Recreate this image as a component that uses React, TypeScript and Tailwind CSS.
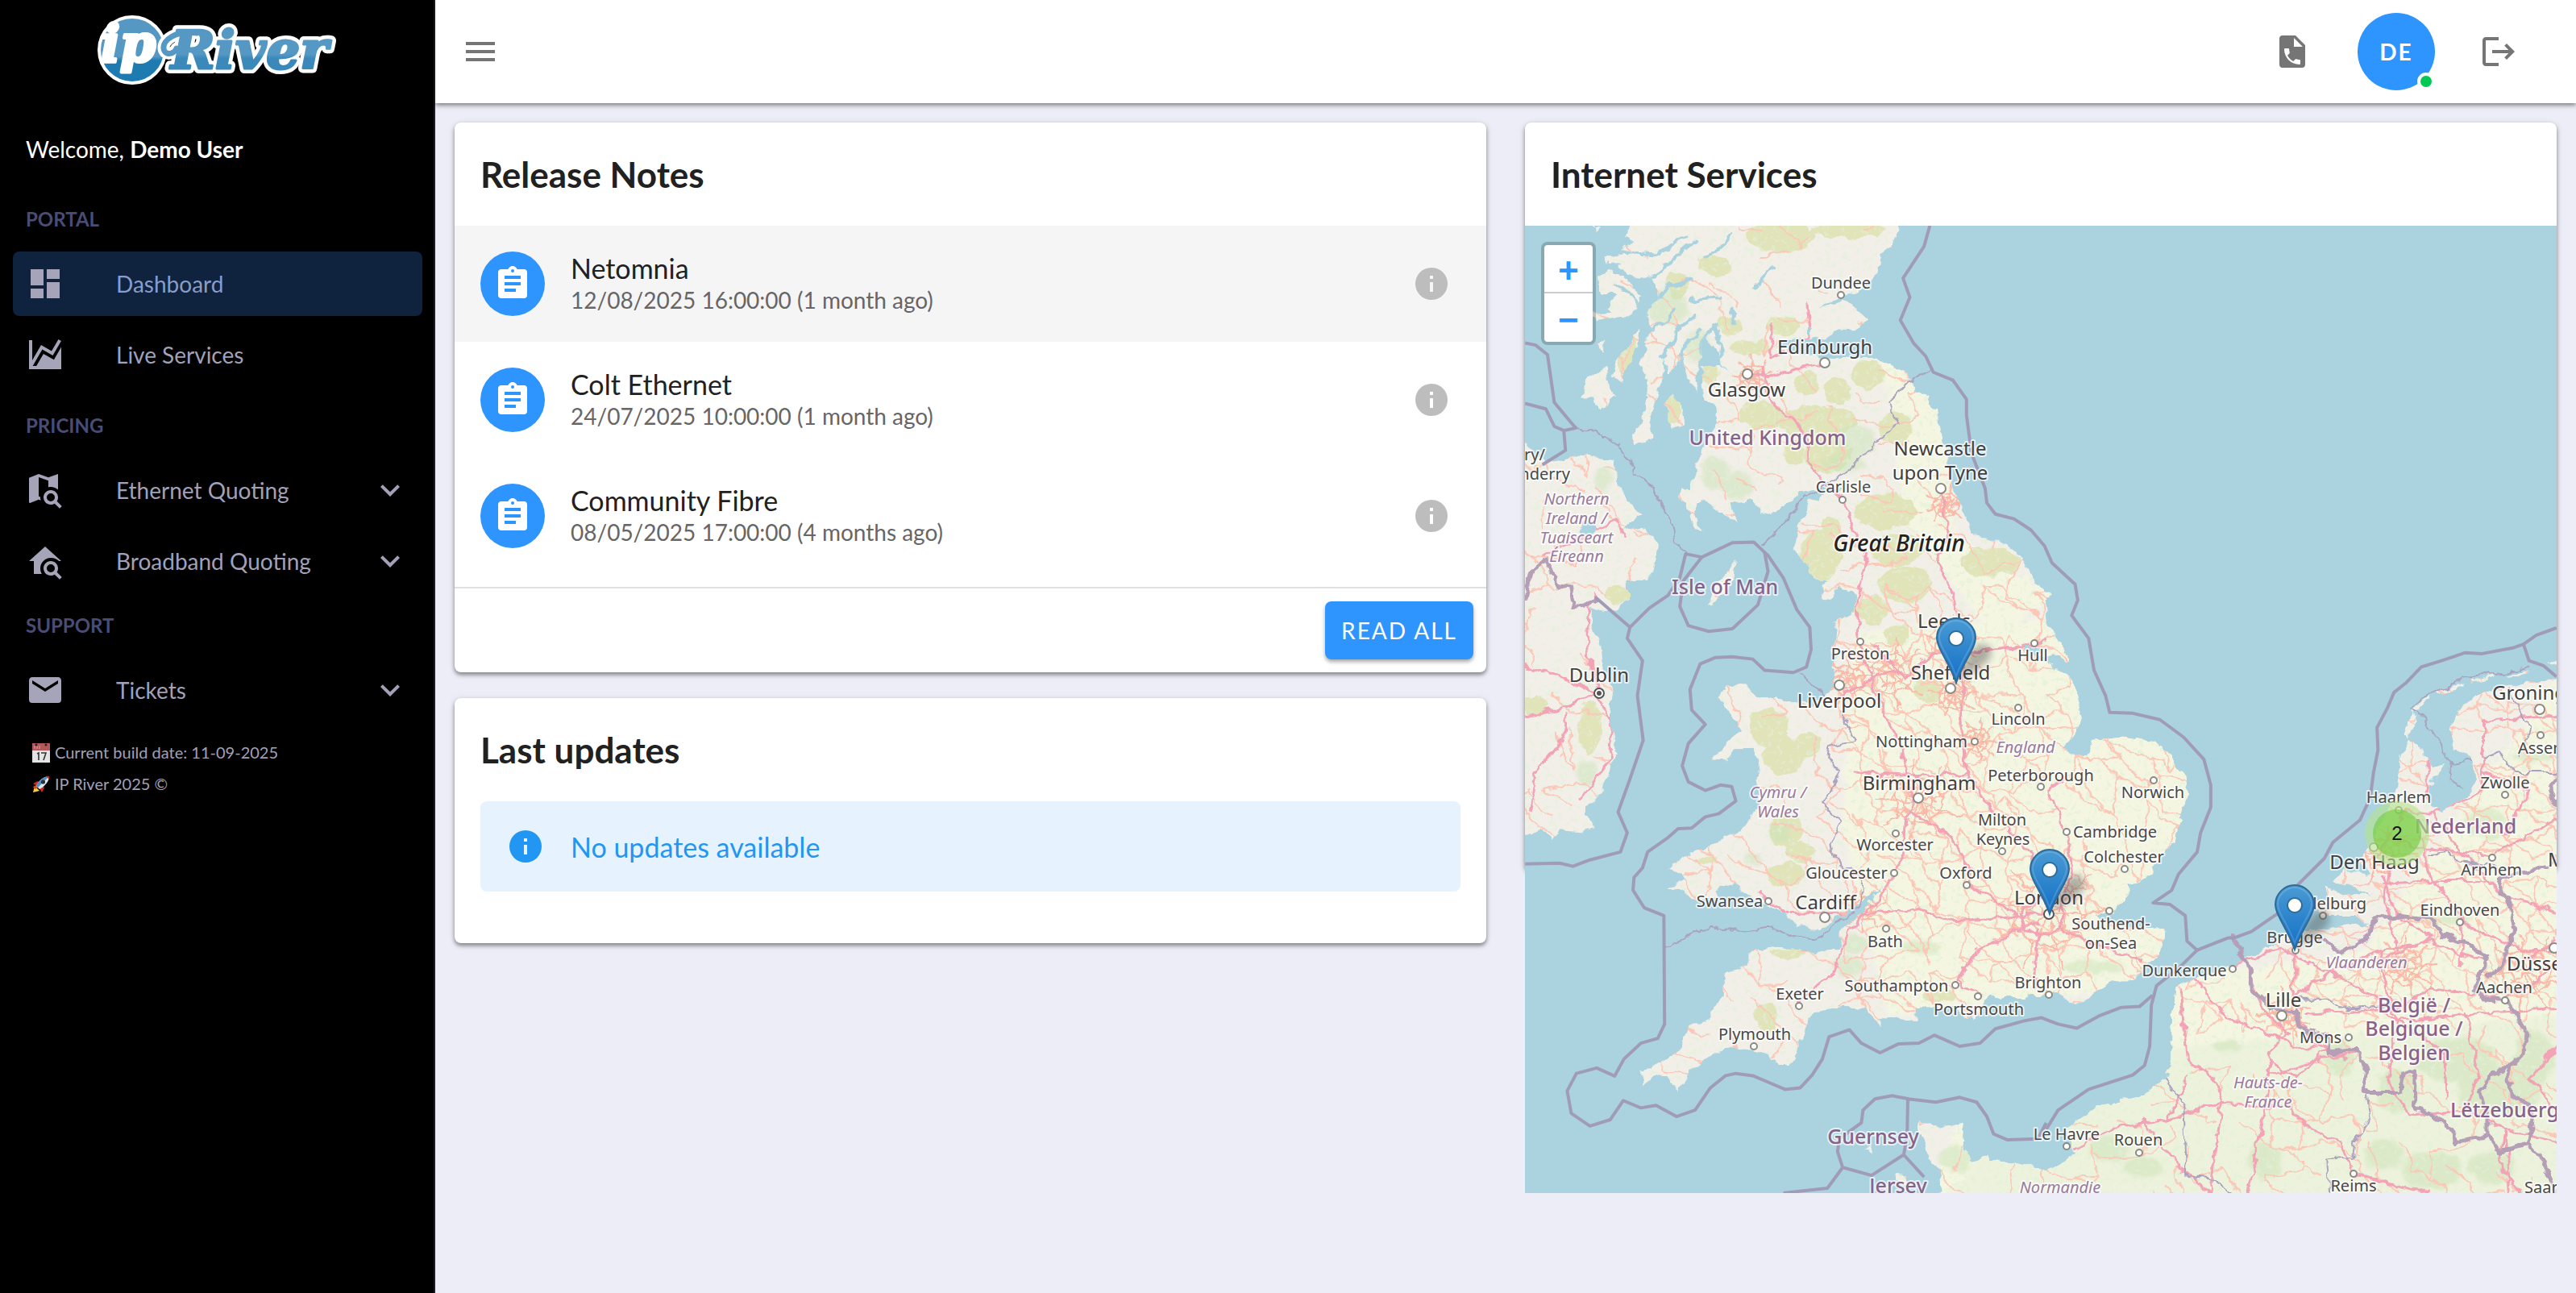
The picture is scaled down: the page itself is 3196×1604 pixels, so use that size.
import type { ReactNode } from "react";
import clsx from "clsx";

const icons = {
    menu: "M3,6H21V8H3V6M3,11H21V13H3V11M3,16H21V18H3V16Z",
    dashboard: "M13,3V9H21V3M13,21H21V11H13M3,21H11V15H3M3,13H11V3H3V13Z",
    chart: "M17.45,15.18L22,7.31V19L22,21H2V3H4V15.54L9.5,6L16,9.78L20.24,2.45L21.97,3.45L16.74,12.5L10.23,8.75L4.31,19H6.57L10.96,11.44L17.45,15.18Z",
    mapSearch:
        "M15.5,12C18,12 20,14 20,16.5C20,17.38 19.75,18.21 19.31,18.9L22.39,22L21,23.39L17.88,20.32C17.19,20.75 16.37,21 15.5,21C13,21 11,19 11,16.5C11,14 13,12 15.5,12M15.5,14A2.5,2.5 0 0,0 13,16.5A2.5,2.5 0 0,0 15.5,19A2.5,2.5 0 0,0 18,16.5A2.5,2.5 0 0,0 15.5,14M2,4.4L8,2L14,4.1L20,2V11.8C18.8,10.7 17.2,10 15.5,10C15,10 14.5,10.1 14,10.2V6.1L8,4V15.9L9,16.2V16.5C9,17.1 9.1,17.8 9.3,18.4L8,17.9L2.6,20Q2,20 2,19.5Z",
    homeSearch:
        "M15.5,12C18,12 20,14 20,16.5C20,17.38 19.75,18.21 19.31,18.9L22.39,22L21,23.39L17.88,20.32C17.19,20.75 16.37,21 15.5,21C13,21 11,19 11,16.5C11,14 13,12 15.5,12M15.5,14A2.5,2.5 0 0,0 13,16.5A2.5,2.5 0 0,0 15.5,19A2.5,2.5 0 0,0 18,16.5A2.5,2.5 0 0,0 15.5,14M12,3L2,12H5V20H9.9C9.3,18.9 9,17.8 9,16.5C9,13 12,10 15.5,10C17.8,10 19.5,11 20.6,12H22Z",
    email: "M20,8L12,13L4,8V6L12,11L20,6M20,4H4C2.89,4 2,4.89 2,6V18A2,2 0 0,0 4,20H20A2,2 0 0,0 22,18V6C22,4.89 21.1,4 20,4Z",
    chevron: "M7.41,8.58L12,13.17L16.59,8.58L18,10L12,16L6,10L7.41,8.58Z",
    clipboard:
        "M17,9H7V7H17M17,13H7V11H17M14,17H7V15H14M12,3A1,1 0 0,1 13,4A1,1 0 0,1 12,5A1,1 0 0,1 11,4A1,1 0 0,1 12,3M19,3H14.82C14.4,1.84 13.3,1 12,1C10.7,1 9.6,1.84 9.18,3H5A2,2 0 0,0 3,5V19A2,2 0 0,0 5,21H19A2,2 0 0,0 21,19V5A2,2 0 0,0 19,3Z",
    info: "M13,9H11V7H13M13,17H11V11H13M12,2A10,10 0 0,0 2,12A10,10 0 0,0 12,22A10,10 0 0,0 22,12A10,10 0 0,0 12,2Z",
    logout: "M17 7L15.59 8.41L18.17 11H8V13H18.17L15.59 15.58L17 17L22 12M4 5H12V3H4C2.9 3 2 3.9 2 5V19C2 20.1 2.9 21 4 21H12V19H4V5Z",
};

function Icon({ name, className }: { name: keyof typeof icons; className?: string }) {
    return (
        <svg viewBox="0 0 24 24" fill="currentColor" aria-hidden="true" className={clsx("size-12 shrink-0", className)}>
            <path d={icons[name]} />
        </svg>
    );
}

function Logo() {
    return (
        <svg viewBox="0 0 300 90" role="img" aria-label="ipRiver" className="h-[90px] w-[300px]">
            <defs>
                <linearGradient id="logo-disc" x1="0" y1="0" x2="0" y2="1">
                    <stop offset="0.6" stopColor="#5598c4" />
                    <stop offset="0.66" stopColor="#1d7bb2" />
                </linearGradient>
                <linearGradient id="logo-word" x1="0" y1="20" x2="0" y2="72" gradientUnits="userSpaceOnUse">
                    <stop offset="0.6" stopColor="#5598c4" />
                    <stop offset="0.7" stopColor="#3a89ba" />
                </linearGradient>
            </defs>
            <circle cx="44" cy="46" r="41" fill="url(#logo-disc)" stroke="#fff" strokeWidth="4" />
            <g fontFamily="'DejaVu Serif', serif" fontWeight="700" fontStyle="italic" strokeLinejoin="round" strokeLinecap="round">
                <g stroke="#fff" strokeWidth="12" fill="#fff">
                    <path d="M124 25C98 21 82 34 83 44c1 9 13 8 16 0" fill="none" strokeWidth="15" />
                    <text x="92" y="69" fontSize="66">
                        River
                    </text>
                </g>
                <g aria-hidden="true" stroke="url(#logo-word)" strokeWidth="3" fill="url(#logo-word)">
                    <path d="M124 25C98 21 82 34 83 44c1 9 13 8 16 0" fill="none" strokeWidth="7" />
                    <text x="92" y="69" fontSize="66">
                        River
                    </text>
                </g>
                <text x="5" y="60" fontSize="63" fill="#fff" stroke="#fff" strokeWidth="4">
                    ip
                </text>
            </g>
        </svg>
    );
}

function CalendarGlyph() {
    return (
        <svg viewBox="0 0 22 24" aria-hidden="true" className="h-6 w-[22px] shrink-0">
            <rect width="22" height="24" fill="#e4e4e4" />
            <rect width="22" height="9" fill="#b4585c" />
            <path d="M3 3v4M6 3v4M9 3v4" stroke="#d9a0a2" strokeWidth="1" />
            <circle cx="5" cy="2" r="1.5" fill="#222" />
            <circle cx="17" cy="2" r="1.5" fill="#222" />
            <path d="M6 13l2-1v9M11 12h6l-3 9" fill="none" stroke="#333" strokeWidth="1.6" />
        </svg>
    );
}

function RocketGlyph() {
    return (
        <svg viewBox="0 0 22 22" aria-hidden="true" className="size-[22px] shrink-0">
            <path d="M1 10l6-3 3 3-4 3zM12 21l3-6-3-3-3 4z" fill="#d8281e" />
            <path d="M1 21l2-8 6 6z" fill="#ffcf33" />
            <path d="M1 14l4-2 2 3-4 2z" fill="#e8431f" />
            <path d="M5 13C8 6 14 1 21 1c0 6-5 12-12 16z" fill="#dfe9ef" />
            <path d="M5 13C8 6 14 1 21 1L7 15z" fill="#4f8fc0" />
            <circle cx="13.5" cy="8" r="2.6" fill="#29323c" />
            <path d="M17 1c2-.5 3-.3 4 0 .3 1 .4 2 0 4z" fill="#d8281e" />
        </svg>
    );
}

type NavItem = { label: string; icon: keyof typeof icons; active?: boolean; expandable?: boolean };

const sections: { title: string; items: NavItem[] }[] = [
    {
        title: "PORTAL",
        items: [
            { label: "Dashboard", icon: "dashboard", active: true },
            { label: "Live Services", icon: "chart" },
        ],
    },
    {
        title: "PRICING",
        items: [
            { label: "Ethernet Quoting", icon: "mapSearch", expandable: true },
            { label: "Broadband Quoting", icon: "homeSearch", expandable: true },
        ],
    },
    { title: "SUPPORT", items: [{ label: "Tickets", icon: "email", expandable: true }] },
];

function NavRow({ item }: { item: NavItem }) {
    const row = clsx(
        "flex h-20 w-full items-center rounded-lg px-4 text-left text-[28px]",
        item.active ? "bg-[#0f233e] text-[#8a9cc8]" : "text-[#a2a1b7]"
    );
    const content = (
        <>
            <Icon name={item.icon} className="mr-16 text-[#a5a4b9]" />
            <span className="flex-1">{item.label}</span>
            {item.expandable && <Icon name="chevron" />}
        </>
    );
    return item.expandable ? (
        <button type="button" className={row}>
            {content}
        </button>
    ) : (
        <a href="#" className={row}>
            {content}
        </a>
    );
}

function Sidebar() {
    return (
        <aside className="w-[540px] shrink-0 bg-black shadow-[inset_-2px_0_#1e1e1e]">
            <div className="flex h-32 justify-center pt-4">
                <Logo />
            </div>
            <p className="flex h-[104px] items-start px-8 pt-9 text-[28px] text-white">
                <span>
                    Welcome, <strong>Demo User</strong>
                </span>
            </p>
            <nav>
                {sections.map((section) => (
                    <div key={section.title} className={clsx("px-4", section.title === "PORTAL" && "pb-2")}>
                        <h2 className="flex h-20 items-center px-4 text-2xl font-bold text-[#4b4c73]">{section.title}</h2>
                        <div className="flex flex-col gap-2">
                            {section.items.map((item) => (
                                <NavRow key={item.label} item={item} />
                            ))}
                        </div>
                    </div>
                ))}
            </nav>
            <div className="px-10 pt-[18px] text-[20px] leading-[39px] text-[#a2a1b7]">
                <p className="flex items-center gap-[6px]">
                    <CalendarGlyph /> Current build date: 11-09-2025
                </p>
                <p className="flex items-center gap-[6px]">
                    <RocketGlyph /> IP River 2025 ©
                </p>
            </div>
        </aside>
    );
}

function TopBar() {
    return (
        <header className="relative z-10 flex h-32 items-center justify-between bg-white pl-8 pr-[72px] text-[#757575] shadow-[0_2px_6px_rgba(0,0,0,0.55)]">
            <button type="button" aria-label="Toggle menu">
                <Icon name="menu" />
            </button>
            <div className="flex items-center">
                <button type="button" aria-label="Call records">
                    <svg viewBox="0 0 24 24" aria-hidden="true" className="size-12">
                        <path d="M6,2H14L20,8V20A2,2 0 0,1 18,22H6A2,2 0 0,1 4,20V4A2,2 0 0,1 6,2M13,3.5V9H18.5L13,3.5Z" fill="currentColor" />
                        <path
                            transform="translate(5.333 8.333) scale(.5556)"
                            d="M6.62,10.79C8.06,13.62 10.38,15.94 13.21,17.38L15.41,15.18C15.69,14.9 16.08,14.82 16.43,14.93C17.55,15.3 18.75,15.5 20,15.5A1,1 0 0,1 21,16.5V20A1,1 0 0,1 20,21A17,17 0 0,1 3,4A1,1 0 0,1 4,3H7.5A1,1 0 0,1 8.5,4C8.5,5.25 8.7,6.45 9.07,7.57C9.18,7.92 9.1,8.31 8.82,8.59L6.62,10.79Z"
                            fill="#fff"
                        />
                    </svg>
                </button>
                <button
                    type="button"
                    className="relative ml-[57px] flex size-24 items-center justify-center rounded-full bg-[#2e95ff] text-[28px] font-bold tracking-[2px] text-white"
                >
                    DE
                    <span className="absolute bottom-0 right-0 size-[22px] rounded-full border-4 border-white bg-[#00c853]" />
                </button>
                <button type="button" aria-label="Log out" className="ml-[55px]">
                    <Icon name="logout" />
                </button>
            </div>
        </header>
    );
}

function Card({ title, className, children }: { title: string; className?: string; children: ReactNode }) {
    return (
        <section className={clsx("rounded-lg bg-white shadow-[0_3px_5px_rgba(0,0,0,0.4),0_2px_10px_rgba(0,0,0,0.12)]", className)}>
            <h2 className="flex h-32 items-center px-8 text-[44px] font-bold text-[#212121]">{title}</h2>
            {children}
        </section>
    );
}

const notes = [
    { name: "Netomnia", date: "12/08/2025 16:00:00 (1 month ago)" },
    { name: "Colt Ethernet", date: "24/07/2025 10:00:00 (1 month ago)" },
    { name: "Community Fibre", date: "08/05/2025 17:00:00 (4 months ago)" },
];

function ReleaseNotes() {
    return (
        <Card title="Release Notes">
            <ul className="pb-4">
                {notes.map((note, i) => (
                    <li key={note.name} className={clsx("flex h-36 items-center px-8", i === 0 && "bg-[#f5f5f5]")}>
                        <span className="flex size-20 items-center justify-center rounded-full bg-[#2e95ff] text-white">
                            <Icon name="clipboard" />
                        </span>
                        <div className="ml-8 flex-1">
                            <div className="text-[34px] leading-[40px] text-[#212121]">{note.name}</div>
                            <div className="text-[28px] leading-[38px] text-[#666]">{note.date}</div>
                        </div>
                        <button type="button" aria-label={`About ${note.name}`} className="mr-3 text-[#bdbdbd]">
                            <Icon name="info" />
                        </button>
                    </li>
                ))}
            </ul>
            <div className="flex justify-end border-t-2 border-[#e0e0e0] p-4">
                <button
                    type="button"
                    className="h-[72px] rounded-lg bg-[#2e95ff] px-5 text-[28px] tracking-[2px] text-white shadow-[0_3px_5px_rgba(0,0,0,0.35)]"
                >
                    READ ALL
                </button>
            </div>
        </Card>
    );
}

function LastUpdates() {
    return (
        <Card title="Last updates" className="pb-16">
            <div role="status" className="mx-8 flex h-28 items-center rounded-lg bg-[#e7f2ff] px-8 text-[34px] text-[#2196f3]">
                <Icon name="info" className="mr-8" />
                No updates available
            </div>
        </Card>
    );
}

/* The map is drawn on a 3100-unit survey grid and scaled to the 1280x1200 view. */
const GRID_X = 0.4209;
const GRID_Y = 0.3954;
const toX = (x: number) => Math.round(x * GRID_X - 12);
const toY = (y: number) => Math.round(y * GRID_Y - 10);

const britain =
    "M1128,0 1128,25 1110,80 1075,120 1065,170 1035,215 1010,232 960,245 895,285 965,260 990,270 1010,300 1042,320 1000,352 950,350 920,375 870,385 800,385 770,400 860,430 900,445 960,440 1065,440 1110,465 1145,480 1165,520 1215,570 1245,610 1258,690 1270,750 1290,850 1310,900 1335,960 1345,990 1400,1005 1470,1040 1500,1080 1520,1130 1560,1180 1585,1190 1558,1205 1570,1275 1610,1335 1630,1385 1600,1378 1560,1375 1500,1345 1540,1385 1575,1400 1595,1420 1630,1435 1655,1490 1677,1573 1650,1618 1617,1663 1650,1688 1685,1693 1705,1643 1790,1633 1885,1648 1940,1698 1975,1748 1983,1823 1955,1893 1945,1953 1910,2013 1875,2033 1875,2060 1830,2083 1803,2093 1805,2143 1760,2178 1710,2183 1760,2208 1840,2233 1912,2228 1900,2313 1850,2353 1815,2398 1760,2398 1710,2428 1650,2468 1600,2438 1520,2438 1500,2448 1430,2448 1400,2433 1350,2520 1310,2500 1300,2473 1180,2478 1180,2523 1130,2513 1075,2508 1075,2543 1062,2518 1030,2488 985,2473 905,2488 865,2513 840,2593 815,2653 780,2653 740,2623 700,2608 600,2613 560,2643 520,2673 500,2713 475,2743 455,2698 410,2693 375,2721 368,2683 410,2658 470,2623 515,2543 570,2513 612,2443 620,2368 690,2343 690,2303 780,2285 870,2308 950,2293 965,2233 1020,2183 1085,2093 1040,2133 1000,2163 950,2193 900,2228 830,2223 800,2183 740,2153 680,2123 650,2088 590,2108 600,2128 545,2148 500,2113 455,2098 500,2078 490,2053 450,2043 510,1998 590,1963 680,1913 715,1843 720,1743 705,1663 650,1668 625,1703 575,1701 640,1638 665,1603 630,1548 590,1510 625,1465 680,1465 715,1510 780,1510 880,1530 920,1500 935,1470 940,1370 945,1265 1000,1240 1000,1180 960,1165 930,1190 910,1200 895,1190 915,1140 880,1140 860,1090 820,1035 835,960 870,890 960,850 880,850 830,860 820,890 770,920 720,930 700,880 640,895 655,965 600,920 545,885 525,920 545,980 530,980 515,925 485,880 490,840 515,855 530,780 555,730 560,690 600,650 590,600 555,570 545,460 610,460 640,490 600,440 570,380 550,370 545,430 530,545 510,510 490,440 465,480 450,490 430,440 435,480 415,570 400,650 405,690 350,720 350,680 370,640 385,580 395,520 370,460 385,400 400,350 385,300 420,250 395,190 350,180 300,150 350,110 310,100 350,80 330,60 345,0Z";
const islands =
    "M260,125 320,115 345,140 270,148ZM240,190 270,165 320,185 375,240 360,285 320,315 270,285 300,240 250,240ZM230,300 330,292 330,305 232,322ZM370,350 365,400 310,515 285,500 300,440ZM270,465 275,510 295,560 240,605 230,560 195,560 215,500ZM465,550 490,580 500,650 460,660 438,590ZM655,1080 650,1130 600,1205 570,1215 590,1150ZM270,385 250,430 248,400ZM225,25 245,25 235,45ZM1030,2930 1055,2915 1050,2935ZM1115,3002 1155,3005 1160,3030 1120,3025Z";
const ireland =
    "M0,700 29,710 60,750 90,770 150,760 200,742 290,760 295,830 330,880 370,930 320,980 385,970 420,1040 405,1110 380,1140 330,1140 330,1200 270,1240 225,1220 225,1290 250,1330 255,1400 285,1490 280,1568 300,1640 285,1720 260,1790 200,1870 235,1915 190,1925 130,1920 105,1950 80,1920 0,1950Z";
const continent =
    "M1185,2833 1240,2853 1325,2843 1320,2903 1350,2968 1390,2948 1500,2973 1570,2988 1650,2938 1625,2853 1720,2788 1830,2758 1915,2703 1935,2653 1935,2543 1940,2473 1945,2418 2000,2388 2120,2348 2220,2288 2290,2235 2370,2240 2440,2220 2520,2215 2480,2190 2370,2190 2360,2150 2390,2130 2380,2103 2440,2120 2520,2125 2410,2080 2440,2043 2520,2060 2490,2010 2520,1973 2570,1863 2600,1783 2610,1683 2630,1633 2680,1673 2700,1730 2745,1720 2695,1783 2700,1853 2730,1863 2800,1813 2830,1753 2820,1693 2765,1673 2760,1603 2775,1545 2830,1500 2920,1470 3090,1440 3090,3080 1255,3080 1250,2990 1210,2930ZM2650,1553 2660,1583 2625,1628 2620,1603ZM2640,1550 2695,1500 2700,1506 2650,1556ZM2720,1480 2795,1460 2790,1470 2720,1490ZM2820,1450 2885,1438 2884,1446 2820,1458ZM2925,1440 2990,1422 2988,1430 2928,1446ZM3040,1395 3090,1380 3090,1395 3045,1402Z";
const land = `${britain}${islands}${ireland}${continent}`;

const lochs =
    "M395,190 450,150 530,70 M350,110 420,115 500,60 M420,250 460,210 520,190 M400,350 440,330 470,290 M385,300 340,240 300,215 M430,440 460,400 480,350 530,310 M490,440 500,400 545,350 M545,430 550,380 590,340 M600,440 605,400 580,340 M640,290 650,330 M520,260 600,250 M560,130 640,60 M700,220 760,160";

const moors: [number, number, number, number][] = [
    [780, 60, 100, 50], [980, 40, 110, 25], [590, 150, 50, 30], [480, 210, 30, 40], [790, 340, 50, 30], [690, 410, 60, 25],
    [630, 340, 40, 30], [725, 620, 70, 45], [890, 640, 120, 50], [1040, 490, 50, 45], [950, 545, 40, 40], [860, 520, 35, 40],
    [1120, 660, 50, 50], [920, 740, 70, 60], [820, 740, 30, 30], [1090, 920, 90, 55], [1120, 1040, 80, 50], [1150, 1150, 80, 60],
    [1050, 1230, 50, 45], [900, 1060, 60, 80], [930, 970, 30, 30], [1400, 1080, 90, 45], [1125, 1310, 40, 30], [1215, 1480, 40, 50],
    [750, 1600, 60, 60], [790, 1690, 60, 60], [860, 1650, 40, 40], [800, 1920, 45, 60], [800, 2060, 55, 40], [840, 1990, 40, 30],
    [570, 2015, 30, 12], [740, 2510, 35, 45], [800, 2310, 50, 18], [300, 1180, 35, 30], [220, 1600, 35, 80], [60, 1530, 40, 30],
    [575, 490, 30, 40], [465, 600, 25, 45], [330, 430, 30, 70], [1250, 2440, 50, 20],
];

const woods: [number, number, number, number][] = [
    [590, 800, 40, 50], [650, 840, 50, 40], [1000, 700, 60, 50], [970, 770, 60, 30], [450, 280, 60, 60], [540, 400, 40, 50],
    [1700, 2350, 90, 20], [1190, 2290, 60, 20], [980, 2350, 50, 30], [1000, 2280, 40, 30], [780, 1930, 30, 30], [700, 2010, 25, 20],
    [2600, 2740, 60, 70], [2770, 2640, 120, 70], [2900, 2740, 120, 80], [3000, 2640, 60, 90], [2560, 2940, 60, 50], [2210, 2960, 50, 60],
    [2430, 2640, 40, 60], [2700, 2990, 90, 60], [2880, 2980, 70, 50], [1750, 2920, 60, 40], [1850, 2980, 60, 30], [2100, 2600, 40, 20],
    [1300, 2950, 50, 40], [2860, 1900, 60, 50], [2750, 2200, 70, 20], [3000, 1690, 60, 20], [260, 820, 20, 40], [210, 1740, 30, 40],
];

const motorways = [
    "M860,270 L870,380 755,440 M755,340 L755,440 M690,490 L750,500 865,462 912,455 M720,470 L760,580 860,680 865,760 900,820 965,884 1000,980 1035,1080 1005,1200 1010,1330 1060,1480 1090,1560 1140,1660 1150,1740 1180,1820 1150,1880 1140,2020 1080,2120 1030,2180 960,2280 940,2370 835,2460",
    "M1255,850 1280,1000 1240,1060 1300,1220 1320,1400 1315,1560 1330,1740 1400,1850 1520,2000 1570,2150 M1060,1350 1150,1440 1240,1360 1390,1360 1560,1330 M950,1500 1050,1450 1130,1420 M1000,1740 1140,1750 1330,1745 M1160,1860 1280,1940 1340,2040 1340,2090 1480,2190 1570,2180 M1030,2185 1190,2170 1290,2205 1480,2190",
    "M720,2120 800,2180 900,2185 1030,2180 M1540,2210 1360,2300 1300,2400 1370,2440 M1620,1760 1570,1800 1620,1920 1640,2050 1600,2180 M1540,2140 1600,2120 1620,2200 1580,2250 1500,2240 1490,2180 1540,2140 M1600,2220 1700,2280 1850,2330 M1540,2230 1530,2420",
    "M150,1560 140,1640 60,1740 40,1860 M250,1490 215,1380 210,1260 235,1180 M245,1500 290,1600 280,1700 190,1830 M245,1490 130,1440 30,1410 M245,1490 130,1540 30,1560 M320,1000 300,950 200,1000 80,1060",
    "M2000,2390 2100,2510 2230,2560 2330,2620 2360,2600 M2160,2360 2200,2480 2280,2560 2220,2620 2220,2750 2180,2950 2160,3060 M1960,2420 1980,2640 2060,2700 2080,2780 2060,2950 2050,3060 M1650,2920 1740,2860 1920,2830 2080,2780 2280,2790 2330,2850 2430,2900 2470,3000 2700,3060 M1990,2690 1920,2830 M2220,2640 2300,2700 2400,2600",
    "M2120,2350 2250,2290 2290,2310 2400,2370 2500,2420 2600,2520 2800,2500 2880,2490 3069,2480 M2300,2300 2290,2450 2400,2370 2550,2300 2700,2270 2850,2330 M2550,2300 2570,2440 2600,2520 2570,2700 2630,2820 2800,2800 2920,2860 2900,2960 2960,3060 M2330,2500 2450,2490 2600,2480 M2800,2490 2840,2680 2800,2800",
    "M2540,2000 2620,1860 2700,1870 2790,1990 2850,2060 2920,2130 3069,2180 M2600,1960 2700,1980 2880,2000 3069,1890 M2560,2090 2700,2080 2860,2080 M2600,2300 2560,2130 2590,2000 M2700,1870 2850,1800 2850,1580 3069,1560 M2660,1900 2690,2050 2790,2210 2790,2350 M2690,1830 2690,1640 2760,1590 M2920,1930 2990,1800 2850,1740 M2990,2330 3069,2260 M2790,2210 2970,2300 3069,2300 M2910,2460 3069,2340",
    "M2560,2330 2700,2260 2600,2190 2560,2070 M2600,2480 2700,2420 2850,2440 2910,2460 M2600,2520 2740,2620 2740,2760 M2300,2500 2360,2590 2450,2640 M2210,2700 2360,2640 2480,2620 M1850,2830 1960,2980 2050,3060 M2920,2860 3069,2900 M2920,2860 2930,3060 M3069,2600 2990,2700 3069,2800",
];

const borders = [
    "M1222,25 1205,90 1143,190 1163,250 1135,322 1175,395 1210,435 1232,485 1290,510 1330,570 1330,620 1345,740 1385,850 1390,895 1415,930 1470,945 1520,980 1560,1030 1582,1083 1612,1113 1650,1150 1658,1200 1640,1248 1690,1320 1706,1420 1740,1500 1752,1552 1820,1555 1900,1575 1970,1630 2030,1700 2050,1780 2050,1850 2020,1930 2010,1990 1955,2060 1935,2110 1880,2150 1930,2155 1975,2190 1980,2270 2010,2298 2100,2260 2118,2260 2170,2240 2245,2185 2300,2100 2385,2010 2410,1960 2490,1890 2520,1820 2530,1740 2543,1670 2540,1600 2570,1540 2590,1490 2625,1460 2670,1410 2730,1390 2800,1365 2850,1368 2940,1350 2972,1338 3010,1310 3069,1287",
    "M2972,1338 2988,1390 3030,1405 3069,1440",
    "M2010,2298 1960,2350 1890,2410 1875,2470 1870,2600 1855,2660 1820,2690 1690,2735 1600,2800 1565,2860",
    "M1878,2440 1840,2475 1785,2478 1720,2505 1655,2543 1600,2530 1550,2510 1500,2520 1415,2545 1370,2590 1310,2600 1235,2565 1190,2590 1130,2592 1075,2620 1020,2590 985,2548 925,2570 905,2640 875,2690 840,2730 795,2735 740,2710 700,2692 650,2685 620,2692 575,2730 530,2800 475,2820 415,2785 370,2793 318,2770 280,2830 220,2850 165,2810 153,2740 180,2685 240,2668 293,2693 320,2640 370,2590 420,2575 440,2530 438,2190 380,2165 347,2110 350,2070 375,2040 390,1990 450,1945 480,1917 520,1915 560,1880 600,1870 650,1830 638,1785 605,1780 560,1797 510,1770 492,1720 510,1650 560,1590 520,1545 515,1480 545,1400 590,1380 640,1378 700,1385 735,1420 820,1427 858,1410 872,1355 868,1285 830,1230 790,1130 745,1060 703,1018 640,1020 550,1065 502,1055 485,1130 450,1185 395,1225 338,1285 235,1190",
    "M338,1285 330,1320 375,1390 360,1500 377,1640 335,1770 303,1865 330,1930 310,1990 220,2015 170,2035 130,2025 29,2028",
    "M550,1065 495,1140 485,1220 510,1280 570,1298 640,1290 715,1215 745,1110 735,1050",
    "M29,393 60,400 95,430 115,580 178,660 143,668 115,655 90,600 29,583M143,668 148,730 80,775",
    "M1160,2765 1110,2755 1060,2765 1025,2800 1020,2840 955,2890 950,2930 965,2980 1050,3005 1145,2940 1155,2880 1157,2765 1240,2775 1310,2760 1360,2775 1390,2820 1410,2875 1450,2893 1540,2890 1565,2840",
    "M1145,2940 1205,3010M965,2980 920,3045 790,3060",
];

const landBorders = [
    "M235,1190 220,1215 170,1220 160,1160 130,1150 90,1075 50,1110 29,1190",
    "M2118,2260 2165,2360 2170,2420 2230,2480 2300,2490 2310,2540 2390,2570 2400,2620 2480,2610 2510,2660 2500,2740 2610,2740 2620,2680 2655,2680 2650,2790 2740,2840 2780,2900 2870,2880 2905,2930 2990,2910 3030,2960 3060,3060",
    "M2370,2270 2440,2300 2520,2250 2530,2200 2600,2190 2700,2200 2730,2250 2790,2270 2860,2320 2830,2420 2850,2455 2930,2460 2980,2550 2975,2620 2930,2670 2880,2680 2845,2740 2870,2840 2870,2880M2930,2670 2930,2740 3000,2800 2985,2910",
    "M2870,2380 2910,2340 2945,2230 2920,2130 2890,2070 3000,2050 3069,2020M3069,1760 3045,1820 3069,1840",
];

const thinBorders = [
    "M178,660 240,670 300,710 360,800 410,850 430,900 465,970 475,1010 502,1055",
    "M725,1030 800,950 850,880 940,825 1000,780 1060,700 1130,650 1100,580 1160,515 1232,475",
    "M445,2285 580,2220 640,2238 750,2225 820,2255 890,2265 960,2200 1020,2160",
    "M840,1427 915,1500M960,1560 1010,1640 925,1660 920,1700 960,1730 930,1800 905,1840 960,1900 930,1960 935,2000 970,2033 1025,2080 1020,2160",
    "M1915,2703 1970,2780 1980,3010 2060,3020 2120,3060M2510,2740 2520,2830 2480,2890 2470,2950 2390,2960 2400,3060",
    "M2650,1545 2700,1600 2760,1710 2820,1700M2760,1710 2755,1760 2790,1790M2640,1540 2700,1490 2810,1440 2930,1430 2990,1410M2310,2450 2400,2450 2450,2480 2570,2470",
    "M2700,2000 2740,1990 2800,2020 2890,2040M2850,1700 2900,1680 2950,1740 3069,1740M2930,1480 2990,1600 2960,1690",
];

// Minor roads: a jittered grid whose neighbours are joined, thinned out over the uplands.
const minorRoads = (() => {
    const step = 76;
    const cols = Math.ceil(3120 / step);
    const rnd = (a: number, b: number, k: number) => {
        const v = Math.sin(a * 127.1 + b * 311.7 + k * 74.7) * 43758.5453;
        return v - Math.floor(v);
    };
    const node = (i: number, j: number) => [
        Math.round((i + rnd(i, j, 1) * 0.8) * step),
        Math.round((j + rnd(i, j, 2) * 0.8) * step),
    ];
    const parts: string[] = [];
    for (let i = 0; i < cols; i++) {
        for (let j = 0; j < cols; j++) {
            const [x, y] = node(i, j);
            const upland = y < 1150 || x < 900 || y > 2480;
            const density = upland ? 0.22 : 0.55;
            const targets = [node(i + 1, j), node(i, j + 1), node(i + 1, j + 1)];
            targets.forEach(([tx, ty], k) => {
                if (rnd(i, j, k + 3) > density) return;
                const bend = (rnd(i, j, k + 9) - 0.5) * 40;
                parts.push(`M${x},${y}Q${Math.round((x + tx) / 2 + bend)},${Math.round((y + ty) / 2 - bend)} ${tx},${ty}`);
            });
        }
    }
    return parts.join("");
})();

// Dense street webs round the big towns
const hubs: [number, number, number][] = [
    [1570, 2190, 110], [1190, 1830, 80], [1110, 1430, 70], [980, 1450, 50], [1290, 1330, 50], [700, 500, 40],
    [1270, 900, 40], [1290, 1500, 45], [1360, 1640, 40], [1030, 2170, 40], [2270, 2500, 50], [2620, 2350, 60], [2560, 2000, 60], [2980, 2370, 80],
];
const webs = hubs
    .map(([x, y, r]) =>
        Array.from({ length: 9 }, (_, i) => {
            const a = (i * Math.PI * 2) / 9 + x;
            const b = a + 0.9;
            const p = (ang: number, f: number) => `${Math.round(x + Math.cos(ang) * r * f)},${Math.round(y + Math.sin(ang) * r * f)}`;
            return `M${x},${y}L${p(a, 1.6)}M${p(a, 0.5)}L${p(b, 0.6)}M${p(a, 1)}L${p(b, 0.9)}`;
        }).join("")
    )
    .join("");

type Kind = "town" | "city" | "country" | "region" | "island";
type Label = { text: string; x: number; y: number; kind: Kind; anchor?: "start" | "end" };

const labelStyle: Record<Kind, string> = {
    town: "text-[20px] fill-[#484848]",
    city: "text-[24px] fill-[#404040]",
    country: "text-[25px] font-medium fill-[#87628a]",
    region: "text-[20px] italic fill-[#977a9e]",
    island: "text-[28px] italic font-medium fill-[#222]",
};

const labels: Label[] = [
    { text: "Dundee", x: 959, y: 222, kind: "town" },
    { text: "Edinburgh", x: 912, y: 427, kind: "city" },
    { text: "Glasgow", x: 682, y: 562, kind: "city" },
    { text: "United Kingdom", x: 744, y: 714, kind: "country" },
    { text: "Newcastle", x: 1253, y: 745, kind: "city" },
    { text: "upon Tyne", x: 1253, y: 823, kind: "city" },
    { text: "Carlisle", x: 966, y: 862, kind: "town" },
    { text: "Derry/", x: 88, y: 762, kind: "town", anchor: "end" },
    { text: "Londonderry", x: 161, y: 821, kind: "town", anchor: "end" },
    { text: "Northern", x: 180, y: 901, kind: "region" },
    { text: "Ireland /", x: 180, y: 961, kind: "region" },
    { text: "Tuaisceart", x: 181, y: 1021, kind: "region" },
    { text: "Éireann", x: 181, y: 1081, kind: "region" },
    { text: "Great Britain", x: 1130, y: 1048, kind: "island" },
    { text: "Isle of Man", x: 617, y: 1181, kind: "country" },
    { text: "Leeds", x: 1265, y: 1288, kind: "city" },
    { text: "Preston", x: 1017, y: 1385, kind: "town" },
    { text: "Hull", x: 1525, y: 1391, kind: "town" },
    { text: "Sheffield", x: 1282, y: 1450, kind: "city" },
    { text: "Dublin", x: 248, y: 1458, kind: "city" },
    { text: "Liverpool", x: 955, y: 1537, kind: "city" },
    { text: "Lincoln", x: 1483, y: 1592, kind: "town" },
    { text: "Nottingham", x: 1197, y: 1661, kind: "town" },
    { text: "England", x: 1503, y: 1680, kind: "region" },
    { text: "Birmingham", x: 1190, y: 1795, kind: "city" },
    { text: "Peterborough", x: 1548, y: 1767, kind: "town" },
    { text: "Norwich", x: 1880, y: 1820, kind: "town" },
    { text: "Cymru /", x: 775, y: 1821, kind: "region" },
    { text: "Wales", x: 775, y: 1882, kind: "region" },
    { text: "Milton", x: 1436, y: 1906, kind: "town" },
    { text: "Keynes", x: 1438, y: 1967, kind: "town" },
    { text: "Worcester", x: 1119, y: 1986, kind: "town" },
    { text: "Cambridge", x: 1768, y: 1945, kind: "town" },
    { text: "Colchester", x: 1794, y: 2023, kind: "town" },
    { text: "Gloucester", x: 976, y: 2073, kind: "town" },
    { text: "Oxford", x: 1328, y: 2074, kind: "town" },
    { text: "Swansea", x: 631, y: 2163, kind: "town" },
    { text: "Cardiff", x: 914, y: 2169, kind: "city" },
    { text: "London", x: 1574, y: 2155, kind: "city" },
    { text: "Southend-", x: 1755, y: 2233, kind: "town" },
    { text: "on-Sea", x: 1755, y: 2294, kind: "town" },
    { text: "Bath", x: 1091, y: 2288, kind: "town" },
    { text: "Exeter", x: 838, y: 2452, kind: "town" },
    { text: "Southampton", x: 1124, y: 2427, kind: "town" },
    { text: "Brighton", x: 1571, y: 2417, kind: "town" },
    { text: "Portsmouth", x: 1365, y: 2502, kind: "town" },
    { text: "Plymouth", x: 705, y: 2580, kind: "town" },
    { text: "Guernsey", x: 1055, y: 2906, kind: "country" },
    { text: "Jersey", x: 1128, y: 3060, kind: "country" },
    { text: "Le Havre", x: 1624, y: 2894, kind: "town" },
    { text: "Rouen", x: 1837, y: 2912, kind: "town" },
    { text: "Normandie", x: 1607, y: 3059, kind: "region" },
    { text: "Dunkerque", x: 1972, y: 2379, kind: "town" },
    { text: "Brugge", x: 2298, y: 2275, kind: "town" },
    { text: "Middelburg", x: 2510, y: 2169, kind: "town", anchor: "end" },
    { text: "Lille", x: 2264, y: 2477, kind: "city" },
    { text: "Mons", x: 2374, y: 2589, kind: "town" },
    { text: "Hauts-de-", x: 2218, y: 2731, kind: "region" },
    { text: "France", x: 2218, y: 2792, kind: "region" },
    { text: "Reims", x: 2472, y: 3054, kind: "town" },
    { text: "Vlaanderen", x: 2509, y: 2355, kind: "region" },
    { text: "België /", x: 2650, y: 2493, kind: "country" },
    { text: "Belgique /", x: 2650, y: 2568, kind: "country" },
    { text: "Belgien", x: 2650, y: 2643, kind: "country" },
    { text: "Haarlem", x: 2604, y: 1835, kind: "town" },
    { text: "Den Haag", x: 2532, y: 2044, kind: "city" },
    { text: "Nederland", x: 2800, y: 1931, kind: "country" },
    { text: "Zwolle", x: 2918, y: 1791, kind: "town" },
    { text: "Arnhem", x: 2877, y: 2064, kind: "town" },
    { text: "Eindhoven", x: 2785, y: 2190, kind: "town" },
    { text: "Aachen", x: 2916, y: 2433, kind: "town" },
    { text: "Groningen", x: 2880, y: 1513, kind: "city", anchor: "start" },
    { text: "Assen", x: 2955, y: 1682, kind: "town", anchor: "start" },
    { text: "Münster", x: 3044, y: 2035, kind: "city", anchor: "start" },
    { text: "Düsseldorf", x: 2922, y: 2361, kind: "city", anchor: "start" },
    { text: "Lëtzebuerg", x: 2757, y: 2823, kind: "country", anchor: "start" },
    { text: "Saarbrücken", x: 2974, y: 3060, kind: "town", anchor: "start" },
];

const towns: [number, number, number][] = [
    [959, 243, 4], [912, 456, 6], [684, 491, 6], [1254, 851, 6], [964, 885, 4], [1017, 1331, 4], [1530, 1335, 4], [1283, 1477, 6],
    [955, 1468, 6], [1483, 1537, 4], [1355, 1645, 4], [1188, 1822, 6], [1548, 1786, 4], [1881, 1765, 4], [1122, 1932, 4],
    [1435, 1989, 4], [1624, 1927, 4], [1796, 2044, 4], [1117, 2055, 4], [1330, 2094, 4], [746, 2145, 4], [912, 2196, 6],
    [1092, 2231, 4], [1752, 2175, 4], [837, 2474, 4], [1298, 2407, 4], [1572, 2439, 4], [1364, 2443, 4], [704, 2600, 4],
    [1625, 2914, 4], [1839, 2934, 4], [2114, 2358, 4], [2299, 2300, 4], [2381, 2191, 4], [2260, 2505, 6], [2456, 2571, 4],
    [2471, 3000, 4], [2603, 1860, 4], [2530, 1975, 5], [2917, 1811, 4], [2879, 2008, 4], [2784, 2211, 4], [2917, 2455, 4],
    [3020, 1543, 6], [3021, 1624, 4], [3062, 2292, 6],
];

const pins = [
    { name: "Sheffield", x: 535, y: 567 },
    { name: "London", x: 651, y: 854 },
    { name: "Brugge", x: 955, y: 898 },
];

function Pin() {
    return (
        <svg viewBox="0 0 82 82" aria-hidden="true" className="h-[82px] w-[82px] overflow-visible">
            <defs>
                <linearGradient id="pin-fill" x1="0" y1="0" x2="0" y2="1">
                    <stop offset="0" stopColor="#4a9bd4" />
                    <stop offset="1" stopColor="#126fc6" />
                </linearGradient>
                <filter id="pin-blur" x="-50%" y="-50%" width="200%" height="200%">
                    <feGaussianBlur stdDeviation="5" />
                </filter>
            </defs>
            <path d="M27 78C32 60 40 42 52 34c14-5 22 8 12 20C54 64 40 70 27 78Z" fill="#333" opacity="0.36" filter="url(#pin-blur)" />
            <path
                d="M25 1C12 1 1 12 1 25c0 8 4 14 8 22 6 11 12 22 16 34 4-12 10-23 16-34 4-8 8-14 8-22C49 12 38 1 25 1Z"
                fill="url(#pin-fill)"
                stroke="#2e6c97"
                strokeWidth="2"
            />
            <path
                d="M25 4C14 4 4 13 4 25c0 7 4 13 8 20 5 9 10 19 13 28 3-9 8-19 13-28 4-7 8-13 8-20C46 13 36 4 25 4Z"
                fill="none"
                stroke="#fff"
                strokeOpacity="0.15"
                strokeWidth="2"
            />
            <circle cx="25" cy="26" r="9" fill="#fff" stroke="#2e6c97" strokeWidth="2" />
        </svg>
    );
}

function ServicesMap() {
    return (
        <div className="relative h-[1200px] overflow-hidden bg-[#aad3df]">
            <svg viewBox="0 0 1280 1200" preserveAspectRatio="xMidYMid slice" role="img" aria-label="Map of service locations" className="block h-full w-full">
                <defs>
                    <clipPath id="land-clip">
                        <path d={land} />
                    </clipPath>
                    <filter id="rough" x="0" y="0" width="100%" height="100%">
                        <feTurbulence type="fractalNoise" baseFrequency="0.06" numOctaves="3" seed="4" />
                        <feDisplacementMap in="SourceGraphic" scale="13" xChannelSelector="R" yChannelSelector="G" />
                    </filter>
                    <filter id="speckle" x="0" y="0" width="100%" height="100%">
                        <feTurbulence type="fractalNoise" baseFrequency="0.07" numOctaves="3" seed="9" />
                        <feColorMatrix values="0 0 0 0 0.76  0 0 0 0 0.87  0 0 0 0 0.68  0 9 0 0 -5.2" />
                        <feComposite operator="in" in2="SourceGraphic" />
                    </filter>
                    <filter id="soft">
                        <feGaussianBlur stdDeviation="6" />
                    </filter>
                </defs>
                <g filter="url(#rough)" strokeLinejoin="round" strokeLinecap="round">
                    <g transform={`translate(-12 -10) scale(${GRID_X} ${GRID_Y})`}>
                        <g clipPath="url(#land-clip)">
                            <rect width="3120" height="3120" fill="#f2efe9" />
                            <g fill="#f4f6e2" filter="url(#soft)">
                                <path d="M1000,1300 1700,1250 2050,1700 1950,2400 1100,2500 960,1900Z" />
                                <path d="M1000,200 1100,350 1250,600 1300,1000 1600,1200 1400,1300 1150,950 1100,550Z" />
                                <path d="M1900,2400 2500,2300 3100,1400 3100,3100 1200,3100 1300,2850Z" />
                            </g>
                            <path d="M1950,2600 2500,2560 3100,2500 3100,3100 1250,3100 1400,2900Z" fill="#eaf1da" opacity="0.7" filter="url(#soft)" />
                            <g fill="#dfe3b4" opacity="0.9">
                                {moors.map(([x, y, rx, ry]) => (
                                    <ellipse key={`${x}-${y}`} cx={x} cy={y} rx={rx} ry={ry} />
                                ))}
                            </g>
                            <g fill="#cde3b8" opacity="0.55" filter="url(#soft)">
                                {woods.map(([x, y, rx, ry]) => (
                                    <ellipse key={`${x}-${y}`} cx={x} cy={y} rx={rx} ry={ry} />
                                ))}
                            </g>
                            <rect width="3120" height="3120" fill="#fff" opacity="0.6" filter="url(#speckle)" />
                            <path d={minorRoads} fill="none" stroke="#fbc8b7" strokeWidth="2" vectorEffect="non-scaling-stroke" />
                            <path d={webs} fill="none" stroke="#fab9a6" strokeWidth="2" vectorEffect="non-scaling-stroke" />
                            {motorways.map((d) => (
                                <path key={d} d={d} fill="none" stroke="#f3a3b6" strokeWidth="3" vectorEffect="non-scaling-stroke" />
                            ))}
                            <path d={lochs} fill="none" stroke="#aad3df" strokeWidth="4" vectorEffect="non-scaling-stroke" />
                            <g fill="#aad3df">
                                <ellipse cx="215" cy="975" rx="24" ry="22" />
                                <path d="M860,345 875,350 872,370 860,362ZM2700,1760 2730,1745 2770,1790 2750,1840 2710,1850ZM1500,1340 1560,1350 1550,1362 1490,1352Z" />
                            </g>
                        </g>
                        {landBorders.map((d) => (
                            <path key={d} d={d} fill="none" stroke="#b59fb6" strokeWidth="5" vectorEffect="non-scaling-stroke" />
                        ))}
                        {thinBorders.map((d) => (
                            <path key={d} d={d} fill="none" stroke="#aaa2bf" strokeWidth="2" vectorEffect="non-scaling-stroke" />
                        ))}
                    </g>
                </g>
                <g transform={`translate(-12 -10) scale(${GRID_X} ${GRID_Y})`} fill="none" stroke="#a09cb8" strokeLinejoin="round">
                    {borders.map((d) => (
                        <path key={d} d={d} strokeWidth="4" vectorEffect="non-scaling-stroke" />
                    ))}
                </g>
                <g fill="#fff" stroke="#8b8b84" strokeWidth="2">
                    {towns.map(([x, y, r]) => (
                        <circle key={`${x}-${y}`} cx={toX(x)} cy={toY(y)} r={r} />
                    ))}
                    <circle cx={toX(246)} cy={toY(1492)} r="6" stroke="#555" />
                    <circle cx={toX(246)} cy={toY(1492)} r="2" fill="#555" stroke="#555" />
                    <circle cx={toX(1573)} cy={toY(2185)} r="6" stroke="#555" />
                </g>
                <g className="font-['Noto_Sans',sans-serif]" stroke="#fff" strokeOpacity="0.7" strokeWidth="4" strokeLinejoin="round" paintOrder="stroke">
                    {labels.map((l) => (
                        <text key={l.text} x={toX(l.x)} y={toY(l.y)} textAnchor={l.anchor ?? "middle"} className={labelStyle[l.kind]}>
                            {l.text}
                        </text>
                    ))}
                </g>
            </svg>

            {pins.map((pin) => (
                <button
                    key={pin.name}
                    type="button"
                    aria-label={`Service in ${pin.name}`}
                    className="absolute"
                    style={{ left: pin.x - 25, top: pin.y - 81 }}
                >
                    <Pin />
                </button>
            ))}
            <button
                type="button"
                className="absolute left-[1042px] top-[714px] flex size-20 items-center justify-center rounded-full bg-[#b5e28c]/60"
            >
                <span className="flex size-[60px] items-center justify-center rounded-full bg-[#6ecc39]/60 font-['Liberation_Sans',sans-serif] text-2xl text-[#111]">
                    2
                </span>
            </button>

            <div className="absolute left-5 top-5 flex flex-col overflow-hidden rounded-lg border-4 border-black/20 bg-white bg-clip-padding font-['Liberation_Mono',monospace] text-[44px] font-bold leading-none text-[#2e95ff]">
                <button type="button" aria-label="Zoom in" className="flex size-[60px] items-center justify-center border-b-2 border-[#ccc] pt-3">
                    +
                </button>
                <button type="button" aria-label="Zoom out" className="flex size-[60px] items-center justify-center pt-3">
                    −
                </button>
            </div>
        </div>
    );
}

export default function App() {
    return (
        <div className="flex min-h-screen bg-[#ededf7] font-['Lato',sans-serif]">
            <Sidebar />
            <div className="min-w-0 flex-1">
                <TopBar />
                <main className="grid grid-cols-2 items-start gap-12 p-6">
                    <div className="flex flex-col gap-8">
                        <ReleaseNotes />
                        <LastUpdates />
                    </div>
                    {/* the map runs past the bottom edge of its card */}
                    <Card title="Internet Services" className="h-[928px]">
                        <ServicesMap />
                    </Card>
                </main>
            </div>
        </div>
    );
}
